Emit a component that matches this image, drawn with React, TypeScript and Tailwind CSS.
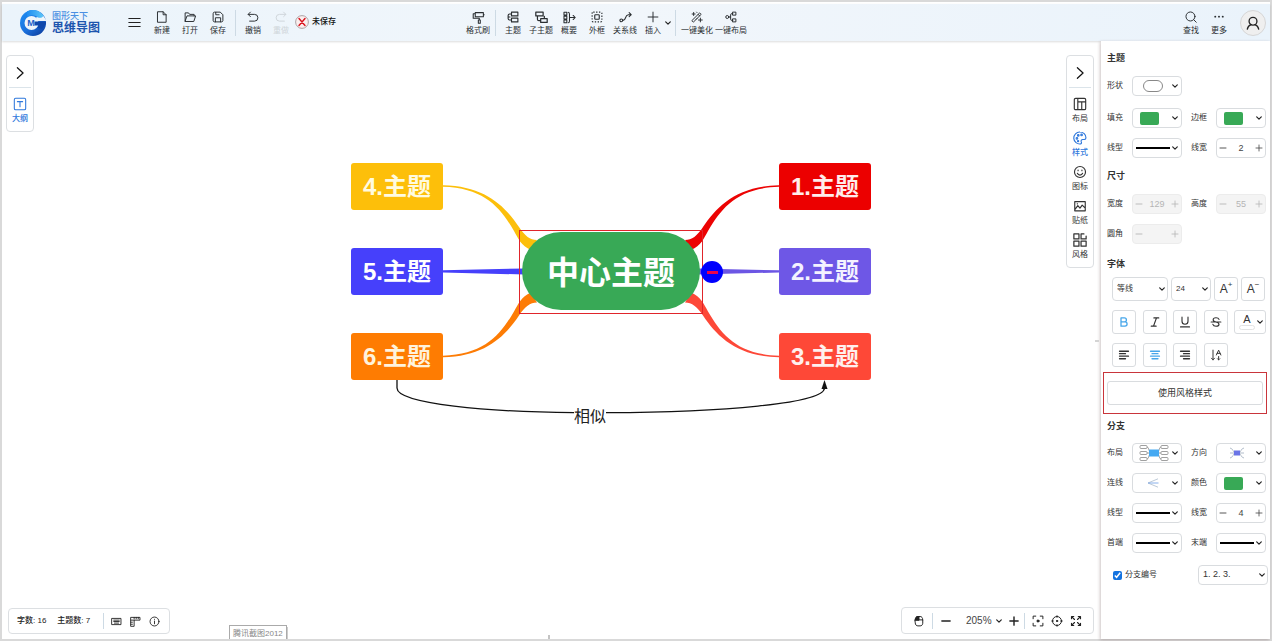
import React, { useState } from "react";
import type { ReactNode } from "react";

type IconProps = { children: ReactNode; className?: string; width?: number };

function Icon({ children, className = "size-3", width = 1.3 }: IconProps) {
  return (
    <svg
      viewBox="0 0 16 16"
      className={"shrink-0 " + className}
      fill="none"
      stroke="currentColor"
      strokeWidth={width}
      strokeLinecap="round"
      strokeLinejoin="round"
      aria-hidden="true"
    >
      {children}
    </svg>
  );
}

function Chevron({ className = "" }: { className?: string }) {
  return (
    <svg
      viewBox="0 0 6 4"
      className={"h-1 w-1.5 shrink-0 text-[#222] " + className}
      fill="none"
      stroke="currentColor"
      strokeWidth="1.2"
      strokeLinecap="round"
      strokeLinejoin="round"
      aria-hidden="true"
    >
      <path d="M.7.8 3 3.1 5.3.8" />
    </svg>
  );
}

const icons = {
  file: (
    <Icon>
      <path d="M2.5 1h7l4 4v10h-11zM9.5 1v4h4" />
    </Icon>
  ),
  open: (
    <Icon>
      <path d="M1.5 13.5V2.5h4.500l1.500 2h6v2M1.500 13.500l2.500-7h11.500l-2.300 7z" />
    </Icon>
  ),
  save: (
    <Icon>
      <path d="M1.500 3.200c0-1 .7-1.700 1.700-1.700H11l3.500 3.500v7.800c0 1-.7 1.700-1.700 1.700H3.200c-1 0-1.700-.7-1.700-1.700zM4.500 14.500V9h7v5.500M5 1.800V5h4.500" />
    </Icon>
  ),
  undo: (
    <Icon>
      <path d="M4.500 1.500 1.500 4.500l3 3M1.800 4.500H10a4.500 4.500 0 0 1 0 9H3.500" />
    </Icon>
  ),
  redo: (
    <Icon>
      <path d="m11.500 1.500 3 3-3 3M14.200 4.500H6a4.500 4.500 0 0 0 0 9h6.500" />
    </Icon>
  ),
  brush: (
    <Icon className="size-[13px]">
      <path d="M4 2h10v5H4zM4 3.500H1.500V9H9v2M14 4.500h1M7.800 11h2.400v4H7.800z" />
    </Icon>
  ),
  topic: (
    <Icon width={1.500}>
      <path d="M6 1.500h8.500v5H6zM6 9.500h8.500v5H6zM6 4H3.500C2.300 4 1.500 4.800 1.500 6v4c0 1.200.8 2 2 2H6M1.500 8H4" />
    </Icon>
  ),
  subtopic: (
    <Icon className="size-[13px]" width={1.500}>
      <path d="M1 1.500h9v4.500H1zM7 9.500h8V14H7zM3 6v4c0 1.100.8 1.800 1.800 1.800H7M11.500 9.500V6.500" />
    </Icon>
  ),
  summary: (
    <Icon className="size-[13px]">
      <path d="M1.200 1.500h3.500v3.500H1.200zM1.200 6.300h3.500v3.500H1.200zM1.200 11h3.500v3.500H1.200zM6.500 1.500C8 1.500 8 3 8 4v8c0 1 0 2.500-1.500 2.500M8 8h7M12.500 5.500 15 8l-2.500 2.500" />
    </Icon>
  ),
  frame: (
    <Icon width={1.500}>
      <rect x="1.500" y="1.500" width="13" height="13" rx="1.500" strokeDasharray="1.800 2" strokeLinecap="butt" />
      <rect x="5" y="5" width="6" height="6" rx="1" />
    </Icon>
  ),
  relation: (
    <Icon className="size-[13px]">
      <circle cx="2.800" cy="11.500" r="1.700" />
      <path d="M4.500 11.500c5 .5 2-6.500 7-7H15M12.500 2 15 4.500 12.500 7" />
    </Icon>
  ),
  plus: (
    <Icon>
      <path d="M8 1.500v13M1.500 8h13" />
    </Icon>
  ),
  wand: (
    <Icon>
      <path d="M1.500 12.500 11.500 2.500l2 2-10 10zM9.500 4.500l2 2M3.500 2v4M1.500 4h4M12.500 9.500v5M10 12h5M7.500 1.500l.4.500M7 11l1-1" />
    </Icon>
  ),
  autolayout: (
    <Icon>
      <circle cx="3" cy="8" r="2" />
      <path d="M10.500 1.500h4v4h-4zM10.500 10.500h4v4h-4zM5 8h2.500M10.500 3.500H9C8 3.500 7.500 4 7.500 5v6c0 1 .5 1.500 1.500 1.500h1.500" />
    </Icon>
  ),
  search: (
    <Icon>
      <circle cx="7.300" cy="7.300" r="6" />
      <path d="m11.700 11.700 3.300 3.300" />
    </Icon>
  ),
  more: (
    <Icon>
      <g fill="currentColor" stroke="none">
        <circle cx="3" cy="7.500" r="1.300" />
        <circle cx="8" cy="7.500" r="1.300" />
        <circle cx="13" cy="7.500" r="1.300" />
      </g>
    </Icon>
  ),
  layout: (
    <Icon className="size-3.5">
      <path d="M3 1.500h10c.8 0 1.500.7 1.500 1.500v10c0 .8-.7 1.500-1.500 1.500H3c-.8 0-1.500-.7-1.500-1.500V3c0-.8.700-1.500 1.500-1.500zM5.500 1.500v13M5.500 5.500h9M10 5.500v9" />
    </Icon>
  ),
  palette: (
    <Icon className="size-3.5">
      <path d="M8 1.200a6.800 6.800 0 1 0 .8 13.500c1.200-.2 1-1.500.6-2.400-.5-1.300.2-2.600 1.600-2.600h2c1.200 0 1.800-.8 1.800-1.900C14.800 4 11.700 1.200 8 1.200z" />
      <circle cx="4.500" cy="8.500" r=".9" />
      <circle cx="6" cy="5" r=".9" />
      <circle cx="9.800" cy="4.500" r=".9" />
      <circle cx="5.800" cy="11.500" r=".7" />
    </Icon>
  ),
  smile: (
    <Icon className="size-3.5">
      <circle cx="8" cy="8" r="6.300" />
      <path d="M5 9.500c.6 1.500 1.700 2 3 2s2.400-.5 3-2M5.800 5.800v.7M10.200 5.800v.7" />
    </Icon>
  ),
  sticker: (
    <Icon className="size-3.5">
      <path d="M2 3h12v10.500H2zM2.500 11.500l3-4 2.500 3 2.500-3.500 3.500 3.500M4.800 5.500h.4" />
    </Icon>
  ),
  style: (
    <Icon className="size-3.5" width={1.400}>
      <path d="M1 1h5.800v5.800H1zM1 9.200h5.800V15H1zM9.200 9.200H15V15H9.200zM12.500 1H9.200v5.800H15V3.500" />
    </Icon>
  ),
};

function Tool({
  icon,
  label,
  wide = false,
  disabled = false,
  menu = false,
}: {
  icon: ReactNode;
  label: string;
  wide?: boolean;
  disabled?: boolean;
  menu?: boolean;
}) {
  return (
    <button
      type="button"
      disabled={disabled}
      className={
        "relative flex h-6 shrink-0 flex-col items-center justify-between text-[8px] leading-[8px] whitespace-nowrap " +
        (wide ? "w-[34px] " : "w-7 ") +
        (disabled ? "text-[#cfd5da]" : "text-[#2a2e31]")
      }
    >
      {icon}
      {label}
      {menu && <Chevron className="absolute top-2.5 -right-1" />}
    </button>
  );
}

function Separator({ className = "" }: { className?: string }) {
  return <span className={"w-px shrink-0 bg-[#cddae4] " + className} />;
}

function Logo() {
  return (
    <a href="#home" className="flex shrink-0 items-center gap-1.5" aria-label="首页">
      <svg viewBox="0 0 26 26" className="size-[26px]" aria-hidden="true">
        <defs>
          <linearGradient id="logo-ring" x1="0" y1="0" x2="0.8" y2="1">
            <stop offset="0" stopColor="#1e90f5" />
            <stop offset="0.6" stopColor="#1b70dc" />
            <stop offset="1" stopColor="#0d3fa0" />
          </linearGradient>
          <linearGradient id="logo-tip" x1="0" y1="0" x2="1" y2="0">
            <stop offset="0" stopColor="#1f8cf0" />
            <stop offset="1" stopColor="#5cc6f8" />
          </linearGradient>
        </defs>
        <circle cx="13" cy="13" r="13" fill="url(#logo-ring)" />
        <circle cx="11.500" cy="13" r="7" fill="#eef5fb" />
        <path d="M16 7.500 23 5.500 27 11H17z" fill="#eef5fb" />
        <path d="M14.500 11.500H26v2.500L22 19l-4.500-1 1-2.500h-4z" fill="#0f48ab" />
        <path d="M7 1.500C13-1.500 20 .5 23.500 6c-1.500 2-3.500 2.200-5.500 1.500C14.500 4.500 10 4.800 7 7z" fill="url(#logo-tip)" />
        <text
          x="11"
          y="16.300"
          textAnchor="middle"
          fontSize="9"
          fontWeight="700"
          fontFamily="Liberation Sans, sans-serif"
          fill="#1b62c8"
        >
          M
        </text>
      </svg>
      <span className="flex flex-col font-bold whitespace-nowrap">
        <span className="text-[9px] leading-[11px] font-medium text-[#4a8fe2]">图形天下</span>
        <span className="text-[12px] leading-[13px] text-[#1c55ae]">思维导图</span>
      </span>
    </a>
  );
}

function Header() {
  return (
    <header className="mt-0.5 flex h-[37px] shrink-0 items-center bg-linear-to-r from-[#ebf4fb] via-[#f1f6fb] to-[#eaf3fb] pr-1 pl-[18px] shadow-[0_1px_2px_rgba(0,0,0,0.14)]">
      <Logo />
      <button type="button" aria-label="菜单" className="mr-[7px] ml-7 shrink-0 text-[#222]">
        <Icon className="size-[13px]" width={1.300}>
          <path d="M1 3h14M1 8h14M1 13h14" />
        </Icon>
      </button>
      <Tool icon={icons.file} label="新建" />
      <Tool icon={icons.open} label="打开" />
      <Tool icon={icons.save} label="保存" />
      <Separator className="mx-[3px] h-[26px]" />
      <Tool icon={icons.undo} label="撤销" />
      <Tool icon={icons.redo} label="重做" disabled />
      <div className="flex shrink-0 items-center gap-[3px] pb-0.5 text-[8px] leading-[10px] font-medium whitespace-nowrap text-[#111]">
        <svg viewBox="0 0 14 14" className="size-3.5" fill="none" aria-hidden="true">
          <circle cx="7" cy="7" r="6.400" fill="#fbeeee" stroke="#9b8f90" strokeWidth=".8" />
          <path d="m4 3.500 6 7M10 3.500l-6 7" stroke="#d9141e" strokeWidth="1.400" strokeLinecap="round" />
        </svg>
        未保存
      </div>

      <nav aria-label="编辑" className="ml-32 flex items-center">
        <Tool icon={icons.brush} label="格式刷" />
        <Separator className="mx-[3px] h-[26px]" />
        <Tool icon={icons.topic} label="主题" />
        <Tool icon={icons.subtopic} label="子主题" />
        <Tool icon={icons.summary} label="概要" />
        <Tool icon={icons.frame} label="外框" />
        <Tool icon={icons.relation} label="关系线" />
        <Tool icon={icons.plus} label="插入" menu />
        <Separator className="mr-1 ml-2 h-[26px]" />
        <Tool icon={icons.wand} label="一键美化" wide />
        <Tool icon={icons.autolayout} label="一键布局" wide />
      </nav>

      <div className="ml-auto flex items-center">
        <Tool icon={icons.search} label="查找" />
        <Tool icon={icons.more} label="更多" />
        <button
          type="button"
          aria-label="账户"
          className="ml-[7px] flex size-[26px] shrink-0 items-center justify-center rounded-full border border-[#d6d6d6] bg-[#efefef] text-[#222]"
        >
          <Icon className="size-3.5" width={1.500}>
            <circle cx="8" cy="6" r="4.500" />
            <path d="M1.500 15c.5-2.500 2-4.500 4.300-5.200M14.500 15c-.5-2.500-2-4.500-4.300-5.200" />
          </Icon>
        </button>
      </div>
    </header>
  );
}

function SideTool({ icon, label, active = false }: { icon: ReactNode; label: string; active?: boolean }) {
  return (
    <button
      type="button"
      className={
        "flex flex-col items-center gap-1 text-[8px] leading-[8px] whitespace-nowrap " +
        (active ? "font-medium text-[#2f78dc]" : "text-[#333]")
      }
    >
      {icon}
      {label}
    </button>
  );
}

function SideBar({ label, className, children }: { label: string; className: string; children: ReactNode }) {
  return (
    <aside
      aria-label={label}
      className={"absolute top-3.5 flex w-7 flex-col items-center rounded border border-[#dcdfe2] bg-white pb-2 " + className}
    >
      <button
        type="button"
        aria-label="收起"
        className="flex h-8 w-[22px] items-center justify-center border-b border-[#dbe4ea] pt-0.5 text-[#111]"
      >
        <Icon className="size-3.5" width={1.400}>
          <path d="m5 2 6.500 6L5 14" />
        </Icon>
      </button>
      <div className="mt-[9px] flex flex-col gap-2">{children}</div>
    </aside>
  );
}

function Topic({ text, className }: { text: string; className: string }) {
  return (
    <div
      className={
        "absolute flex h-[47px] w-[92px] items-center justify-center rounded-[3px] text-[24px] leading-[24px] font-bold whitespace-nowrap " +
        className
      }
    >
      {text}
    </div>
  );
}

const branch =
  "M443 185.200C485 186 505 206 519 227C525 236 530 240 537 240L531 250C521 246 518 238 514 231C500 207 484 188 443 186.800Z";

function MindMap() {
  return (
    <div className="absolute top-[109px] left-[338px] h-[290px] w-[540px]">
      <svg viewBox="340 150 540 290" className="absolute inset-0 size-full" aria-hidden="true">
        <path d={branch} fill="#fcbf0b" />
        <path d={branch} fill="#fd7c05" transform="translate(0 542.500) scale(1 -1)" />
        <path d={branch} fill="#ec0303" transform="translate(1222 0) scale(-1 1)" />
        <path d={branch} fill="#fd4838" transform="translate(1222 542.500) scale(-1 -1)" />
        <path d="M443 270.300 525 268.500v6L443 272.500z" fill="#4640fb" />
        <path d="M779 270.300 697 268.500v6l82-2z" fill="#6c56e4" />
        <path
          d="M397 380v8C397 404 490 412 574 412.700H607C720 412 824 404 824.500 388"
          fill="none"
          stroke="#111"
          strokeWidth="1.300"
        />
        <path d="m824.500 380 3 9h-6z" fill="#111" />
      </svg>
      <Topic text="4.主题" className="top-[13px] left-[11px] bg-[#fdbf0a] text-[#fffbe0]" />
      <Topic text="5.主题" className="top-[98px] left-[11px] bg-[#4640fb] text-white" />
      <Topic text="6.主题" className="top-[183px] left-[11px] bg-[#fe7c02] text-[#fff3dc]" />
      <Topic text="1.主题" className="top-[13px] left-[439px] bg-[#ec0000] text-[#ffeceb]" />
      <Topic text="2.主题" className="top-[98px] left-[439px] bg-[#6e57e6] text-[#f4f2ff]" />
      <Topic text="3.主题" className="top-[183px] left-[439px] bg-[#fe4837] text-[#fff0ee]" />
      <div className="absolute top-[82px] left-[182px] flex h-[78px] w-[178px] items-center justify-center rounded-full bg-[#38a956] pt-1 text-[32px] leading-[32px] font-bold whitespace-nowrap text-white">
        中心主题
      </div>
      <div className="absolute top-[80px] left-[179px] h-[84px] w-[184px] border border-[#e0252b]" />
      <button
        type="button"
        aria-label="收起分支"
        className="absolute top-[111px] left-[361px] flex size-[22px] items-center justify-center rounded-full bg-[#0000fe]"
      >
        <span className="h-[3px] w-[11px] bg-[#e8044c]" />
      </button>
      <div className="absolute top-[257px] left-[234px] bg-white text-[16px] leading-[20px] whitespace-nowrap text-[#222]">
        相似
      </div>
    </div>
  );
}

function StatusBar() {
  return (
    <div className="absolute bottom-[5px] left-1.5 flex h-[26px] w-[162px] items-center rounded border border-[#dcdfe2] bg-white pl-2 text-[8px] leading-[10px] font-medium whitespace-nowrap text-[#222]">
      <span>字数: 16</span>
      <span className="ml-[11px]">主题数: 7</span>
      <Separator className="mr-[7px] ml-[13px] h-4" />
      <div className="flex gap-2">
        <button type="button" aria-label="快捷键">
          <Icon className="size-[11px]">
            <path d="M1.500 3.500h13v9h-13zM4 6h8M4 8h8M5 10.300h6" />
          </Icon>
        </button>
        <button type="button" aria-label="标尺">
          <Icon className="size-[11px]">
            <path d="M1.500 2h13v4H6v9H1.500zM6 2v2M9 2v2M12 2v2M1.500 9h2M1.500 12h2M1.500 6H6" />
          </Icon>
        </button>
        <button type="button" aria-label="信息">
          <Icon className="size-[11px]">
            <circle cx="8" cy="8" r="6.500" />
            <path d="M8 7.300v4M8 4.700v.2" />
          </Icon>
        </button>
      </div>
    </div>
  );
}

function ZoomBar() {
  return (
    <div className="absolute right-[7px] bottom-[5px] flex h-[27px] w-[193px] items-center rounded border border-[#dcdfe2] bg-white pl-[11px] text-[#222]">
      <button type="button" aria-label="鼠标模式">
        <Icon className="size-3">
          <path d="M3 6.500h10V11c0 2-1.500 3.500-3.500 3.500h-3C4.500 14.500 3 13 3 11zM3 6.500C3 3.500 4.500 2 6.500 2h3C11.500 2 13 3.500 13 6.500" />
          <path d="M3 6.500C3 3.500 4.500 2 6.500 2H8v4.500z" fill="currentColor" />
        </Icon>
      </button>
      <Separator className="mx-[7px] h-4" />
      <button type="button" aria-label="缩小">
        <Icon className="size-3" width={1.900}>
          <path d="M2.500 8h11" />
        </Icon>
      </button>
      <label className="relative ml-3 flex items-center">
        <select
          aria-label="缩放比例"
          defaultValue="205%"
          className="w-9 appearance-none bg-transparent pl-0.5 text-[10px] leading-[12px] text-[#444]"
        >
          <option>205%</option>
        </select>
        <Chevron className="pointer-events-none absolute -right-0.5" />
      </label>
      <button type="button" aria-label="放大" className="ml-2">
        <Icon className="size-3" width={1.900}>
          <path d="M8 2.500v11M2.500 8h11" />
        </Icon>
      </button>
      <Separator className="mr-[7px] ml-1 h-4" />
      <div className="flex gap-[7px]">
        <button type="button" aria-label="适应选区">
          <Icon className="size-3">
            <path d="M1.500 5V1.500H5M11 1.500h3.500V5M14.500 11v3.500H11M5 14.500H1.500V11" />
            <circle cx="8" cy="8" r="1.400" fill="currentColor" />
          </Icon>
        </button>
        <button type="button" aria-label="居中">
          <Icon className="size-3">
            <circle cx="8" cy="8" r="6" />
            <circle cx="8" cy="8" r=".9" fill="currentColor" />
            <path d="M8 1v2M8 13v2M1 8h2M13 8h2" />
          </Icon>
        </button>
        <button type="button" aria-label="全屏">
          <Icon className="size-3" width={1.500}>
            <path d="M2 5V2h3M11 2h3v3M14 11v3h-3M5 14H2v-3M2.500 2.500 6 6M13.500 2.500 10 6M13.500 13.500 10 10M2.500 13.500 6 10" />
          </Icon>
        </button>
      </div>
    </div>
  );
}

function Heading({ children, className = "" }: { children: ReactNode; className?: string }) {
  return <h2 className={"pl-1 text-[9px] leading-[12px] font-bold text-[#333] " + className}>{children}</h2>;
}

function Row({ children, className = "" }: { children: ReactNode; className?: string }) {
  return <div className={"flex items-center justify-between pl-1 " + className}>{children}</div>;
}

function Caption({ children, htmlFor }: { children: ReactNode; htmlFor?: string }) {
  return (
    <label htmlFor={htmlFor} className="w-[25px] shrink-0 text-[8px] leading-[10px] whitespace-nowrap text-[#333]">
      {children}
    </label>
  );
}

function Picker({ id, label, children }: { id: string; label: string; children: ReactNode }) {
  return (
    <div className="flex items-center">
      <Caption htmlFor={id}>{label}</Caption>
      <button
        id={id}
        type="button"
        aria-haspopup="listbox"
        className="flex h-5 w-[50px] items-center justify-between rounded border border-[#d9dcdf] bg-white px-[3px]"
      >
        <span className="flex flex-1 items-center justify-center">{children}</span>
        <Chevron />
      </button>
    </div>
  );
}

function Swatch() {
  return <span className="mr-2.5 h-[13px] w-[19px] rounded-[2px] bg-[#38a956]" />;
}

function LineSample() {
  return <span className="mr-0.5 h-0.5 w-[34px] bg-black" />;
}

function Stepper({
  id,
  label,
  initial,
  disabled = false,
}: {
  id: string;
  label: string;
  initial: string;
  disabled?: boolean;
}) {
  const [value, setValue] = useState(initial);
  const step = (by: number) => setValue(String(Number(value) + by));
  return (
    <div className="flex items-center">
      <Caption htmlFor={id}>{label}</Caption>
      <div
        className={
          "flex h-5 w-[50px] items-center justify-between rounded border px-0.5 " +
          (disabled ? "border-[#ececec] bg-[#f4f4f4] text-[#b5b5b5]" : "border-[#d9dcdf] bg-white text-[#444]")
        }
      >
        <button type="button" aria-label="减少" disabled={disabled} onClick={() => step(-1)}>
          <Icon className="size-2" width={1.800}>
            <path d="M2 8h12" />
          </Icon>
        </button>
        <input
          id={id}
          value={value}
          disabled={disabled}
          onChange={(e) => setValue(e.target.value)}
          className="w-6 min-w-0 bg-transparent text-center text-[9px] leading-[12px]"
        />
        <button type="button" aria-label="增加" disabled={disabled} onClick={() => step(1)}>
          <Icon className="size-2" width={1.600}>
            <path d="M8 2v12M2 8h12" />
          </Icon>
        </button>
      </div>
    </div>
  );
}

function Choice({ label, value, className }: { label: string; value: string; className: string }) {
  return (
    <label className={"relative flex items-center rounded border border-[#d9dcdf] bg-white " + className}>
      <select
        aria-label={label}
        defaultValue={value}
        className="size-full appearance-none bg-transparent pl-1 text-[#333]"
      >
        <option>{value}</option>
      </select>
      <Chevron className="pointer-events-none absolute right-0.5" />
    </label>
  );
}

function Square({ label, active = false, children }: { label: string; active?: boolean; children: ReactNode }) {
  return (
    <button
      type="button"
      aria-label={label}
      aria-pressed={active}
      className={
        "flex size-6 shrink-0 items-center justify-center rounded-[3px] border border-[#d9dcdf] bg-white text-[12px] leading-[14px] " +
        (active ? "text-[#46a6ea]" : "text-[#333]")
      }
    >
      {children}
    </button>
  );
}

function BranchLayoutArt() {
  return (
    <svg viewBox="0 0 30 18" className="h-[18px] w-[30px]" fill="none" stroke="#888" strokeWidth=".8" aria-hidden="true">
      <path d="M8 3c2 0 2 6 4 6M8 9h4M8 15c2 0 2-6 4-6M22 3c-2 0-2 6-4 6M22 9h-4M22 15c-2 0-2-6-4-6" />
      <g fill="#fff">
        <rect x="1" y="1.500" width="7" height="3" rx="1" />
        <rect x="1" y="7.500" width="7" height="3" rx="1" />
        <rect x="1" y="13.500" width="7" height="3" rx="1" />
        <rect x="22" y="1.500" width="7" height="3" rx="1" />
        <rect x="22" y="7.500" width="7" height="3" rx="1" />
        <rect x="22" y="13.500" width="7" height="3" rx="1" />
      </g>
      <rect x="10" y="5.500" width="10" height="7" rx=".5" fill="#45a9f2" stroke="none" />
    </svg>
  );
}

function DirectionArt() {
  return (
    <svg viewBox="0 0 16 12" className="mr-0.5 h-3 w-4" fill="none" stroke="#a9b6c4" strokeWidth=".9" aria-hidden="true">
      <path d="M1 1c3 0 3 5 6 5M1 11c3 0 3-5 6-5M15 1c-3 0-3 5-6 5M15 11c-3 0-3-5-6-5M1 6h14" />
      <rect x="5" y="3.500" width="6" height="5" fill="#6a74e6" stroke="none" />
    </svg>
  );
}

function ConnectorArt() {
  return (
    <svg viewBox="0 0 12 10" className="mr-0.5 h-2.5 w-3" fill="none" strokeWidth=".9" aria-hidden="true">
      <path d="M11 .8 1 5l10 4.200" stroke="#b4c3d2" />
      <path d="M1 5h10.500" stroke="#7aa6e8" />
    </svg>
  );
}

function Inspector() {
  return (
    <section
      aria-label="样式"
      className="flex w-[169px] shrink-0 flex-col bg-white pt-[11px] pr-1 pl-0.5 shadow-[-1px_1px_3px_rgba(90,60,60,0.3)]"
    >
      <Heading>主题</Heading>
      <Row className="mt-3">
        <Picker id="shape" label="形状">
          <span className="mr-0.5 h-3 w-5 rounded-full border border-[#888]" />
        </Picker>
      </Row>
      <Row className="mt-3">
        <Picker id="fill" label="填充">
          <Swatch />
        </Picker>
        <Picker id="border" label="边框">
          <Swatch />
        </Picker>
      </Row>
      <Row className="mt-2.5">
        <Picker id="line" label="线型">
          <LineSample />
        </Picker>
        <Stepper id="line-width" label="线宽" initial="2" />
      </Row>

      <Heading className="mt-3">尺寸</Heading>
      <Row className="mt-3">
        <Stepper id="width" label="宽度" initial="129" disabled />
        <Stepper id="height" label="高度" initial="55" disabled />
      </Row>
      <Row className="mt-2.5">
        <Stepper id="radius" label="圆角" initial="" disabled />
      </Row>

      <Heading className="mt-3.5">字体</Heading>
      <div className="mt-[7px] flex items-center gap-[3px] pl-[9px]">
        <Choice label="字体" value="等线" className="h-6 w-14 text-[8px]" />
        <Choice label="字号" value="24" className="h-6 w-10 text-[8px]" />
        <Square label="增大字号">
          <span>A</span>
          <span className="self-start text-[8px] leading-[14px]">+</span>
        </Square>
        <Square label="减小字号">
          <span>A</span>
          <span className="self-start text-[8px] leading-[14px]">−</span>
        </Square>
      </div>
      <div className="mt-[9px] grid grid-cols-[24px_24px_24px_24px_32px] justify-between gap-y-[9px] pl-[9px]">
        <Square label="加粗" active>
          <Icon className="size-3" width={1.700}>
            <path d="M4 2.500h4.500a2.700 2.700 0 0 1 0 5.400H4zM4 7.900h5.300a2.800 2.800 0 0 1 0 5.600H4z" />
          </Icon>
        </Square>
        <Square label="斜体">
          <Icon className="size-3" width={1.600}>
            <path d="M6.500 2.500H13M3 13.500h6.500M10 2.500l-4 11" />
          </Icon>
        </Square>
        <Square label="下划线">
          <Icon className="size-3" width={1.500}>
            <path d="M4 1.500V7a4 4 0 0 0 8 0V1.500M2 14.500h12" />
          </Icon>
        </Square>
        <Square label="删除线">
          <Icon className="size-3" width={1.500}>
            <path d="M12 4.500C11.500 3 10 2.300 8 2.300S4.200 3.200 4.200 5 6 7.500 8 8s4 1.200 4 3-2 2.700-4 2.700-3.700-.8-4.200-2.500M1.500 8h13" />
          </Icon>
        </Square>
        <button
          type="button"
          aria-label="字体颜色"
          className="flex h-6 items-center justify-between rounded-[3px] border border-[#d9dcdf] pr-0.5 pl-1 text-[#333]"
        >
          <span className="flex w-4 flex-col items-center text-[11px] leading-[11px]">
            A
            <span className="h-[5px] w-4 rounded-sm border border-[#e3e3e3] bg-white" />
          </span>
          <Chevron />
        </button>
        <Square label="左对齐">
          <Icon className="size-3" width={1.700}>
            <path d="M2 3h12M2 6.300h8M2 9.600h12M2 13h8" />
          </Icon>
        </Square>
        <Square label="居中对齐" active>
          <Icon className="size-3" width={1.700}>
            <path d="M2 3h12M4 6.300h8M2 9.600h12M4 13h8" />
          </Icon>
        </Square>
        <Square label="右对齐">
          <Icon className="size-3" width={1.700}>
            <path d="M2 3h12M6 6.300h8M2 9.600h12M6 13h8" />
          </Icon>
        </Square>
        <Square label="文字方向">
          <Icon className="size-3">
            <path d="M4 1.500v13M2 12.300l2 2.200 2-2.200M8.500 8 11.500 1.500 14.500 8M9.500 5.800h4M11.500 10v4.500M10 13l1.500 1.500L13 13" />
          </Icon>
        </Square>
      </div>

      <div className="mt-[5px] -mr-px border border-[#c9353b] px-[3px] py-2">
        <button
          type="button"
          className="block h-6 w-full rounded-[3px] border border-[#d9dcdf] bg-white text-[9px] leading-[12px] text-[#333]"
        >
          使用风格样式
        </button>
      </div>

      <Heading className="mt-1.5">分支</Heading>
      <Row className="mt-[11px]">
        <Picker id="branch-layout" label="布局">
          <BranchLayoutArt />
        </Picker>
        <Picker id="branch-direction" label="方向">
          <DirectionArt />
        </Picker>
      </Row>
      <Row className="mt-2.5">
        <Picker id="branch-connector" label="连线">
          <ConnectorArt />
        </Picker>
        <Picker id="branch-color" label="颜色">
          <Swatch />
        </Picker>
      </Row>
      <Row className="mt-2.5">
        <Picker id="branch-line" label="线型">
          <LineSample />
        </Picker>
        <Stepper id="branch-width" label="线宽" initial="4" />
      </Row>
      <Row className="mt-2.5">
        <Picker id="branch-start" label="首端">
          <LineSample />
        </Picker>
        <Picker id="branch-end" label="末端">
          <LineSample />
        </Picker>
      </Row>
      <div className="mt-3 -mr-0.5 flex items-center justify-between pl-2.5">
        <label className="flex items-center gap-[3px] text-[8px] leading-[10px] whitespace-nowrap text-[#333]">
          <input type="checkbox" defaultChecked className="size-[9px] accent-[#1473e0]" />
          分支编号
        </label>
        <Choice label="编号格式" value="1. 2. 3." className="h-5 w-[70px] text-[9px]" />
      </div>
    </section>
  );
}

export default function App() {
  return (
    <div className="flex min-h-screen flex-col border-2 border-[#d9d9d9] bg-white font-['Liberation_Sans','Noto_Sans_CJK_SC',sans-serif]">
      <Header />
      <div className="flex flex-1">
        <main className="relative flex-1 overflow-hidden">
          <MindMap />
          <SideBar label="大纲" className="left-1">
            <SideTool
              active
              label="大纲"
              icon={
                <Icon className="size-3.5" width={1.200}>
                  <rect x="1.500" y="1.500" width="13" height="13" rx="1.500" />
                  <path d="M5 5.300h6M8 5.300v5.700" />
                </Icon>
              }
            />
          </SideBar>
          <SideBar label="工具" className="right-[7px]">
            <SideTool icon={icons.layout} label="布局" />
            <SideTool icon={icons.palette} label="样式" active />
            <SideTool icon={icons.smile} label="图标" />
            <SideTool icon={icons.sticker} label="贴纸" />
            <SideTool icon={icons.style} label="风格" />
          </SideBar>
          <span className="absolute top-[299px] right-0.5 h-0.5 w-1 bg-[#d4d4d4]" />
          <StatusBar />
          <div className="absolute bottom-0 left-[227px] border border-b-0 border-[#aaa] bg-white px-[3px] pt-0.5 text-[8px] leading-[11px] whitespace-nowrap text-[#888] shadow-[1px_2px_0_#ccc]">
            腾讯截图2012
          </div>
          <span className="absolute bottom-0 left-[546px] h-1 w-0.5 bg-[#c4c4c4]" />
          <ZoomBar />
        </main>
        <Inspector />
      </div>
    </div>
  );
}
